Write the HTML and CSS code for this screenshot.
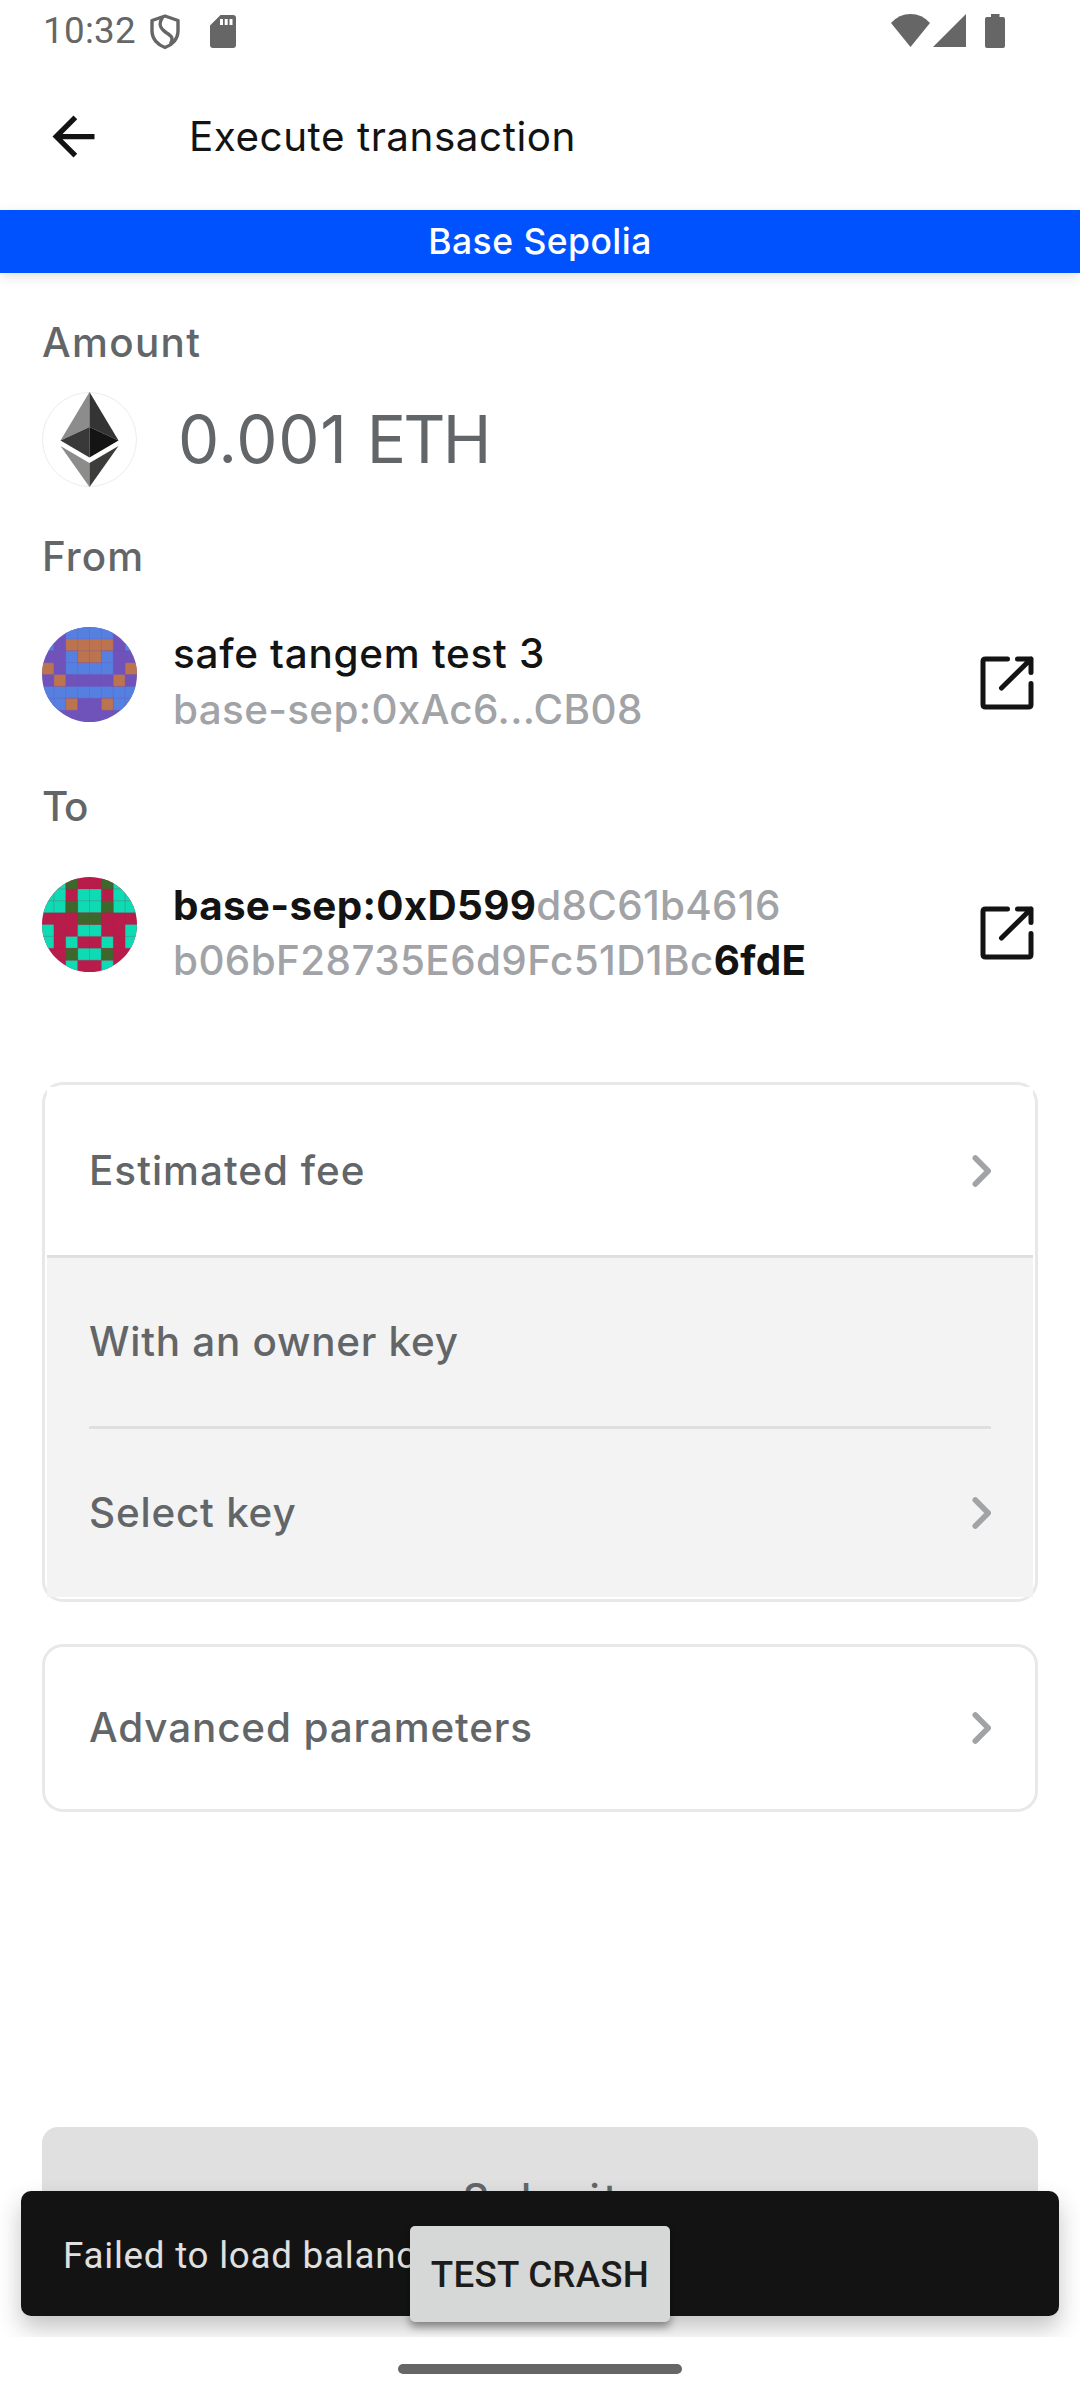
FILE: index.html
```html
<!DOCTYPE html>
<html lang="en">
<head>
<meta charset="utf-8">
<title>Execute transaction</title>
<link rel="stylesheet" href="styles.css">
</head>
<body>
<svg class="defs" width="0" height="0" aria-hidden="true">
  <symbol id="chevron" viewBox="0 0 20 34"><path d="M4.300 4 L17.200 17 L4.300 30" fill="none" stroke="#a1a3a7" stroke-width="5.600" stroke-linecap="round" stroke-linejoin="round"/></symbol>
  <symbol id="external" viewBox="0 0 54 54"><path d="M27.500 3H5.500Q3 3 3 5.500V48.500Q3 51 5.500 51H48.500Q51 51 51 48.500V27.500M37.500 3H51V16.500M51 3L21.500 32" fill="none" stroke="#121312" stroke-width="5" stroke-linecap="round" stroke-linejoin="round"/></symbol>
</svg>
<div class="screen">
  <main class="app">
    <div class="status">
      <span class="clock">10:32</span>
      <svg class="shield" width="32" height="36" viewBox="0 0 32 36"><g fill="none" stroke="#666" stroke-width="3.400" stroke-linejoin="round"><path d="M16 2L29 6.500V17C29 25 23 31 16 33.500C9 31 3 25 3 17V6.500Z"/><path d="M13.500 3.500C8.500 11 12 15 17 18.500C22.500 22 25 24 21.500 30"/></g></svg>
      <svg class="sd" width="26" height="33" viewBox="0 0 26 33"><path fill="#666" fill-rule="evenodd" d="M10.500 0H23Q26 0 26 3V30Q26 33 23 33H3Q0 33 0 30V10.500ZM10 4V10H13V4ZM14.700 4V10H17.700V4ZM19.500 4V10H22.500V4Z"/></svg>
      <span class="grow"></span>
      <svg class="wifi" width="39" height="33" viewBox="0 0 39 33"><path fill="#666" d="M0 9Q8 0 19.500 0T39 9L19.500 33Z"/></svg>
      <svg class="signal" width="33" height="33" viewBox="0 0 33 33"><path fill="#666" d="M33 0V33H0Z"/></svg>
      <svg class="battery" width="20" height="34" viewBox="0 0 20 34"><path fill="#666" d="M6 0H14.500V3H18Q20 3 20 5V32Q20 34 18 34H2Q0 34 0 32V5Q0 3 2 3H6Z"/></svg>
    </div>
    <header class="toolbar">
      <svg width="63" height="63" viewBox="0 0 24 24"><path fill="#121312" d="M20 11H7.830l5.590-5.590L12 4l-8 8 8 8 1.410-1.410L7.830 13H20v-2z"/></svg>
      <h1 class="title">Execute transaction</h1>
    </header>
    <div class="network"><span>Base Sepolia</span></div>
    <section class="content">
      <h2 class="label amount-label">Amount</h2>
      <div class="amount">
        <svg width="95" height="95" viewBox="0 0 95 95">
          <circle cx="47.500" cy="47.500" r="47" fill="#fff" stroke="#ececec"/>
          <path fill="#8c8c8c" d="M47.500 0V35L18.500 48.500Z"/><path fill="#343434" d="M47.500 0V35L76.500 48.500Z"/>
          <path fill="#393939" d="M47.500 35V65.500L18.500 48.500Z"/><path fill="#141414" d="M47.500 35V65.500L76.500 48.500Z"/>
          <path fill="#8c8c8c" d="M47.500 71V95L18.500 54Z"/><path fill="#3c3c3b" d="M47.500 71V95L76.500 54Z"/>
        </svg>
        <span class="value">0.001 <span class="unit">ETH</span></span>
      </div>
      <h2 class="label from-label">From</h2>
      <div class="account">
        <svg class="avatar" width="95" height="95" viewBox="0 0 8 8"><rect width="8" height="8" fill="#7053ba"/>
          <path fill="#5680e0" d="M0 0h1v1h-1zM2 0h1v1h-1zM3 0h1v1h-1zM4 0h1v1h-1zM5 0h1v1h-1zM7 0h1v1h-1zM0 1h1v1h-1zM7 1h1v1h-1zM2 2h1v1h-1zM5 2h1v1h-1zM2 3h1v1h-1zM3 3h1v1h-1zM4 3h1v1h-1zM5 3h1v1h-1zM0 5h1v1h-1zM1 5h1v1h-1zM2 5h1v1h-1zM3 5h1v1h-1zM4 5h1v1h-1zM5 5h1v1h-1zM6 5h1v1h-1zM7 5h1v1h-1zM0 6h1v1h-1zM1 6h1v1h-1zM6 6h1v1h-1zM7 6h1v1h-1z"/>
          <path fill="#bc744e" d="M2 1h1v1h-1zM3 1h1v1h-1zM4 1h1v1h-1zM5 1h1v1h-1zM3 2h1v1h-1zM4 2h1v1h-1zM0 3h1v1h-1zM7 3h1v1h-1zM1 4h1v1h-1zM6 4h1v1h-1zM2 6h1v1h-1zM5 6h1v1h-1z"/>
          <path fill="none" stroke="#7053ba" stroke-opacity=".4" stroke-width=".07" d="M1 0V8M2 0V8M3 0V8M4 0V8M5 0V8M6 0V8M7 0V8M0 1H8M0 2H8M0 3H8M0 4H8M0 5H8M0 6H8M0 7H8"/></svg>
        <div class="lines">
          <p class="line name">safe tangem test 3</p>
          <p class="line address short">base-sep:0xAc6...CB08</p>
        </div>
        <svg class="external" width="54" height="54"><use href="#external"/></svg>
      </div>
      <h2 class="label to-label">To</h2>
      <div class="account">
        <svg class="avatar" width="95" height="95" viewBox="0 0 8 8"><rect width="8" height="8" fill="#b71c4b"/>
          <path fill="#0cdbb3" d="M0 0h1v1h-1zM1 0h1v1h-1zM6 0h1v1h-1zM7 0h1v1h-1zM0 1h1v1h-1zM1 1h1v1h-1zM3 1h1v1h-1zM4 1h1v1h-1zM6 1h1v1h-1zM7 1h1v1h-1zM0 2h1v1h-1zM1 2h1v1h-1zM3 2h1v1h-1zM4 2h1v1h-1zM6 2h1v1h-1zM7 2h1v1h-1zM0 4h1v1h-1zM3 4h1v1h-1zM4 4h1v1h-1zM7 4h1v1h-1zM0 5h1v1h-1zM2 5h1v1h-1zM5 5h1v1h-1zM7 5h1v1h-1zM3 6h1v1h-1zM4 6h1v1h-1zM2 7h1v1h-1zM5 7h1v1h-1z"/>
          <path fill="#3e682b" d="M2 0h1v1h-1zM5 0h1v1h-1zM2 2h1v1h-1zM5 2h1v1h-1zM3 3h1v1h-1zM4 3h1v1h-1zM2 6h1v1h-1zM5 6h1v1h-1z"/>
          <path fill="none" stroke="#b71c4b" stroke-opacity=".3" stroke-width=".07" d="M1 0V8M2 0V8M3 0V8M4 0V8M5 0V8M6 0V8M7 0V8M0 1H8M0 2H8M0 3H8M0 4H8M0 5H8M0 6H8M0 7H8"/></svg>
        <div class="lines tight">
          <p class="line address"><b class="start">base-sep:0xD599</b><span class="mid-one">d8C61b4616</span></p>
          <p class="line address"><span class="mid-two">b06bF28735E6d9Fc51D1Bc</span><b class="end">6fdE</b></p>
        </div>
        <svg class="external" width="54" height="54"><use href="#external"/></svg>
      </div>
      <div class="card summary">
        <div class="row plain"><span class="fee">Estimated fee</span><svg width="20" height="34"><use href="#chevron"/></svg></div>
        <div class="signer">
          <div class="row"><span class="owner">With an owner key</span></div>
          <hr>
          <div class="row"><span class="select">Select key</span><svg width="20" height="34"><use href="#chevron"/></svg></div>
        </div>
      </div>
      <div class="card advanced">
        <div class="row"><span class="params">Advanced parameters</span><svg width="20" height="34"><use href="#chevron"/></svg></div>
      </div>
      <button class="submit">Submit</button>
    </section>
    <div class="snackbar">Failed to load balances</div>
    <button class="crash">TEST CRASH</button>
  </main>
  <footer class="nav"><span class="handle"></span></footer>
</div>
</body>
</html>
```
FILE: styles.css
```css
* { box-sizing: border-box; }
body { margin: 0; background: #fff; font-family: Inter, "Liberation Sans", sans-serif; }
h1, h2, p { margin: 0; font-weight: 500; }
button { border: 0; padding: 0; }
svg { display: block; flex: none; }
.defs { position: absolute; }
.screen { width: 1080px; height: 2400px; display: flex; flex-direction: column; overflow: hidden; }
.app { position: relative; height: 2337px; overflow: hidden; }

.status { height: 63px; padding: 14px 75px 0 43px; display: flex; align-items: flex-start; color: #666; }
.clock { width: 106px; font: 400 36.750px/34px Roboto, sans-serif; letter-spacing: 0.300px; }
.sd { margin: 1px 0 0 29px; }
.grow { flex: 1; }
.signal { margin-left: 3px; }
.battery { margin-left: 19px; }

.toolbar { height: 147px; padding-left: 42px; display: flex; align-items: center; gap: 84px; color: #121312; }
.title { font-size: 40.400px; font-weight: 400; line-height: 48px; letter-spacing: 0.530px; }

.network { position: relative; height: 63px; display: flex; align-items: center; justify-content: center; background: #0052ff; color: #fff; font-size: 35.500px; font-weight: 500; line-height: 48px; letter-spacing: 0.450px; box-shadow: 0 4px 12px rgba(0, 0, 0, .12); }

.content { padding: 46px 42px 0; display: flex; flex-direction: column; }
.label { font-size: 40.400px; line-height: 48px; color: #636669; }
.amount-label { letter-spacing: 1.350px; }
.amount { margin-top: 25px; display: flex; align-items: center; gap: 41px; }
.value { font-size: 65.500px; font-weight: 400; line-height: 80px; letter-spacing: 0.700px; color: #636669; }
.unit { letter-spacing: -2.900px; }
.from-label { margin-top: 46px; letter-spacing: 1.100px; }
.to-label { margin-top: 45px; letter-spacing: -1.300px; }
.account { margin-top: 46px; height: 111px; padding-right: 4px; display: flex; align-items: center; }
.avatar { align-self: flex-start; border-radius: 50%; }
.lines { flex: 1; margin: -1px 0 1px 36px; }
.lines.tight { margin: 0 0 0 36px; }
.line { font-size: 40.400px; line-height: 56px; white-space: nowrap; }
.tight .line { line-height: 55px; }
.name { color: #121312; letter-spacing: 0.740px; }
.address { color: #a1a3a7; }
.address b { color: #121312; font-weight: 700; }
.short { letter-spacing: 0.360px; }
.start { letter-spacing: 0.310px; }
.mid-one { letter-spacing: 0.300px; }
.mid-two { letter-spacing: 0.410px; }
.end { letter-spacing: 0.300px; }

.card { border: 3px solid #e8e8e7; border-radius: 21px; }
.row { height: 168px; padding: 0 42px; display: flex; align-items: center; justify-content: space-between; font-size: 40.400px; font-weight: 500; line-height: 48px; color: #636669; }
.plain { background: #fff; }
.summary { margin-top: 94px; padding: 2px; }
.signer { border-top: 3px solid #dedfde; background: #f3f3f3; }
.signer hr { height: 3px; margin: 0 42px; border: 0; background: #dedfde; }
.fee { letter-spacing: 1.010px; }
.owner { letter-spacing: 0.740px; }
.select { letter-spacing: 0.800px; }
.params { letter-spacing: 0.880px; }
.advanced { margin-top: 42px; }
.advanced .row { height: 162px; padding: 0 44px; }

.submit { margin-top: 315px; height: 143px; padding-left: 4px; border-radius: 16px; background: #e0e0e0; color: #636669; font: 500 40.400px/48px Inter, sans-serif; letter-spacing: 3.900px; }

.snackbar { position: absolute; left: 21px; top: 2191px; width: 1038px; height: 125px; padding: 0 42px; border-radius: 10px; background: #131313; color: #e0e0e0; font: 400 36.750px/129px Roboto, sans-serif; letter-spacing: 0.750px; box-shadow: 0 12px 24px rgba(0, 0, 0, .24); }
.crash { position: absolute; left: 410px; top: 2226px; width: 260px; height: 96px; border-radius: 5px; background: #d6d8d7; color: #1c1c1c; font: 500 36.750px/97px Roboto, sans-serif; letter-spacing: 0.250px; box-shadow: 0 5px 8px rgba(0, 0, 0, .4); }

.nav { height: 63px; display: flex; align-items: center; justify-content: center; background: #fff; }
.handle { width: 284px; height: 10px; border-radius: 5px; background: #666; }
```
